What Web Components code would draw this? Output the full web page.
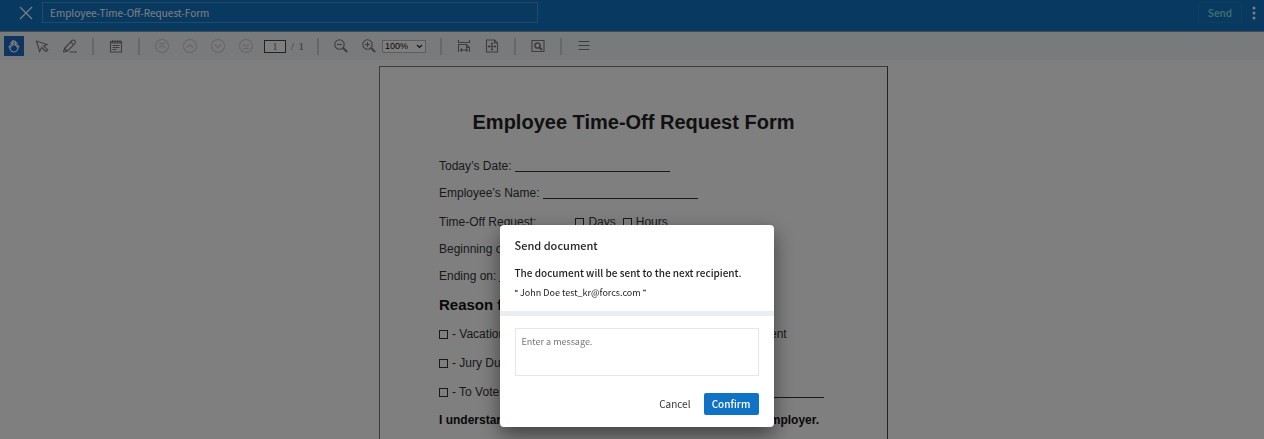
<!DOCTYPE html>
<html lang="en">
<head>
<meta charset="utf-8">
<title>Employee-Time-Off-Request-Form</title>
<style>
html, body { margin: 0; height: 100%; }
body { background: #fff; font-family: "Noto Sans CJK KR", "Open Sans", sans-serif; }
</style>
</head>
<body>
<doc-app></doc-app>
<script>
const define = (name, html) => customElements.define(name, class extends HTMLElement {
  constructor() {
    super();
    this.attachShadow({ mode: "open" }).innerHTML = html;
  }
});

define("app-header", `
<style>
:host { display: flex; align-items: flex-start; box-sizing: border-box; height: 32px; padding: 2px 7px 0 18px; background: #1072c2; border-bottom: 1px solid #8a98a8; font-family: inherit; }
button { font: inherit; margin: 0; padding: 0; border: 0; background: none; }
svg { display: block; }
.close { width: 16px; height: 22px; display: grid; place-items: center; }
input { box-sizing: border-box; width: 40%; height: 21px; margin-left: 8px; padding: 0 7px 1px; border: 1px solid #4a94d0; border-radius: 0; background: transparent; color: #fff; font: 10px "Noto Sans CJK KR", sans-serif; }
.send { box-sizing: border-box; width: 44px; height: 21px; margin-left: auto; border: 1px solid #1b80b8; border-radius: 2px; color: #86e5dc; font-size: 10px; font-weight: 500; line-height: 19px; }
.more { width: 6px; height: 21px; margin-left: 9px; display: grid; place-items: center; }
</style>
<button class="close" aria-label="Close"><svg width="14" height="14" viewBox="0 0 14 14"><path d="M1 1l12 12M13 1L1 13" stroke="#fff" stroke-width="1.200"/></svg></button>
<input aria-label="Document name" value="Employee-Time-Off-Request-Form">
<button class="send">Send</button>
<button class="more" aria-label="More"><svg width="4" height="14" viewBox="0 0 4 14" fill="#fff"><circle cx="2" cy="2" r="1.500"/><circle cx="2" cy="7" r="1.500"/><circle cx="2" cy="12" r="1.500"/></svg></button>
`);

define("tool-button", `
<style>
:host { display: block; width: 20px; height: 20px; flex: none; }
button { width: 100%; height: 100%; padding: 0; border: 0; background: none; display: grid; place-items: center; color: inherit; }
:host([active]) button { background: #1c6ac0; }
</style>
<button><slot></slot></button>
`);

define("tool-bar", `
<style>
:host { display: flex; align-items: center; box-sizing: border-box; height: 28px; padding-left: 4px; background: #f3f4f7; color: #7c7c7c; }
svg { display: block; width: 16px; height: 16px; fill: none; stroke: currentColor; stroke-width: 1.100; }
.sep { width: 2px; height: 17px; background: #cfcfcf; }
.g3 { margin-left: 3px; } .g8 { margin-left: 8px; } .g12 { margin-left: 12px; } .g14 { margin-left: 14px; }
.off { color: #cdcdcd; }
input { box-sizing: border-box; width: 22px; height: 13px; padding: 0; border: 1px solid #444; border-radius: 0; background: #fff; color: #777; text-align: center; font: 10px "Liberation Serif", serif; margin-left: 8px; }
.total { font: 10px "Liberation Serif", serif; color: #666; margin-left: 5px; width: 14px; white-space: pre; }
.zoom { display: grid; align-items: center; justify-items: end; }
.zoom > * { grid-area: 1 / 1; }
.zoom svg { width: 7px; height: 5px; margin-right: 3px; stroke: #222; pointer-events: none; }
select { appearance: none; box-sizing: border-box; width: 44px; height: 13px; padding: 0 2px; border: 1px solid #bbb; border-radius: 0; background: #fff; color: #111; font: 9px "Liberation Sans", sans-serif; }
</style>
<tool-button active><svg viewBox="0 0 16 16" style="color:#fff"><path d="M5 9.500V4.500q.7-1 1.400 0V8M6.400 7.500V3q.8-1 1.500 0v4.500M7.900 7.500V3.500q.8-1 1.500 0V8M9.400 8V5q.8-.8 1.400 0v4.500l.8-1.500q1-.6 1.200.4L11 12.500Q10 14 8 14 5.500 14 4.600 12L3 8.500q.5-1 1.200-.2L5 9.500"/></svg></tool-button>
<tool-button class="g8"><svg viewBox="0 0 16 16"><path d="M2.500 3l3 10.500 2.300-4 4.200 4 1.800-1.800-4.200-3.500 3.400-1.600z"/></svg></tool-button>
<tool-button class="g8"><svg viewBox="0 0 16 16"><path d="M2.500 10.500L10 2.500q1.200-1 2.700.2t.3 2.800L5.500 13l-3.900.8zM8.800 3.800l3 3M2.500 10.500l3 2.500M7.500 14H15"/></svg></tool-button>
<span class="sep g12"></span>
<tool-button class="g12"><svg viewBox="0 0 16 16"><path d="M2.500 3.500h11v10.500h-11zM2.500 5h11M4.500 7.500h7M4.500 9.500h7M4.500 11.500h4M4.500 2v2.500M7 2v2.500M9.500 2v2.500M12 2v2.500"/></svg></tool-button>
<span class="sep g12"></span>
<tool-button class="g12 off"><svg viewBox="0 0 16 16"><circle cx="8" cy="8" r="6.500"/><path d="M5 5.500h6M5 10.200l3-3 3 3"/></svg></tool-button>
<tool-button class="g8 off"><svg viewBox="0 0 16 16"><circle cx="8" cy="8" r="6.500"/><path d="M5 9.500l3-3 3 3"/></svg></tool-button>
<tool-button class="g8 off"><svg viewBox="0 0 16 16"><circle cx="8" cy="8" r="6.500"/><path d="M5 6.500l3 3 3-3"/></svg></tool-button>
<tool-button class="g8 off"><svg viewBox="0 0 16 16"><circle cx="8" cy="8" r="6.500"/><path d="M5 10.500h6M5 5.800l3 3 3-3"/></svg></tool-button>
<input aria-label="Page" value="1"><span class="total">/  1</span>
<span class="sep g12"></span>
<tool-button class="g12"><svg viewBox="0 0 16 16"><circle cx="6.500" cy="6.500" r="4.700"/><path d="M4 6.500h5"/><path d="M10 10l4.200 4" stroke-width="2"/></svg></tool-button>
<tool-button class="g8"><svg viewBox="0 0 16 16"><circle cx="6.500" cy="6.500" r="4.700"/><path d="M4 6.500h5M6.500 4v5"/><path d="M10 10l4.200 4" stroke-width="2"/></svg></tool-button>
<span class="zoom g3"><select aria-label="Zoom"><option>100%</option></select><svg viewBox="0 0 7 5"><path d="M1 1l2.500 2.500L6 1"/></svg></span>
<span class="sep g14"></span>
<tool-button class="g12"><svg viewBox="0 0 16 16"><path d="M2.500 2v2.500h11V2M2.500 14V6.500h8l3 3V14M10.500 6.500v3h3M4.500 12h7M6 10.500L4.500 12 6 13.500M10 10.500l1.500 1.500-1.500 1.500"/></svg></tool-button>
<tool-button class="g8"><svg viewBox="0 0 16 16"><path d="M2.500 2h8l3 3v9h-11zM10.500 2v3h3M8 5v7M4.500 8.500h7M7 6l1-1 1 1M7 11l1 1 1-1M5.500 7.500l-1 1 1 1M10.500 7.500l1 1-1 1"/></svg></tool-button>
<span class="sep g12"></span>
<tool-button class="g12"><svg viewBox="0 0 16 16"><path d="M2 2.500h12v11H2z"/><circle cx="7.500" cy="7.500" r="2.600" stroke-width="1.500"/><path d="M9.500 9.500l2.500 2.500" stroke-width="1.800"/></svg></tool-button>
<span class="sep g12"></span>
<tool-button class="g12"><svg viewBox="0 0 16 16"><path d="M2.500 3.500h11M2.500 7.500h11M2.500 11.500h11"/></svg></tool-button>
`);

define("blank-line", `
<style>:host { display: block; height: 1px; margin-top: 13px; background: #333; }</style>
`);

define("form-page", `
<style>
:host { display: block; box-sizing: border-box; width: 509px; min-height: 600px; margin: 6px auto 0; padding: 43px 59px 0; border: 1px solid #777; border-right-color: #444; color: #333; font: 12px/16px "Liberation Sans", Arial, sans-serif; white-space: nowrap; }
h1 { margin: 0; text-align: center; font-size: 20px; line-height: 24px; color: #222; }
h2 { margin: 11px 0 11px; font-size: 15px; line-height: 20px; color: #111; }
.row { display: flex; margin-bottom: 11px; }
.row blank-line { width: 155px; margin-left: 3px; }
h1 + .row { margin-top: 24px; }
.request { margin-top: 13px; }
.opts { display: grid; grid-template-columns: 120px 136px 1fr; margin-bottom: 13px; }
.opts .wide { display: flex; grid-column: 2 / 4; }
.wide blank-line { flex: 1; margin-right: 4px; }
label { display: flex; align-items: center; gap: 4px; }
input { appearance: none; box-sizing: border-box; width: 9px; height: 9px; margin: 0; border: 1px solid #333; border-radius: 0; }
.units { display: flex; gap: 7px; margin-left: 39px; }
p { margin: -1px 0 0; font-weight: bold; color: #111; }
</style>
<h1>Employee Time-Off Request Form</h1>
<div class="row">Today’s Date:<blank-line></blank-line></div>
<div class="row">Employee’s Name:<blank-line></blank-line></div>
<div class="row request">Time-Off Request:<span class="units"><label><input type="checkbox">Days</label><label><input type="checkbox">Hours</label></span></div>
<div class="row">Beginning on:<blank-line></blank-line></div>
<div class="row">Ending on:<blank-line></blank-line></div>
<h2>Reason for Request</h2>
<div class="opts"><label><input type="checkbox">- Vacation</label><label><input type="checkbox">- Personal Leave</label><label><input type="checkbox">- Bereavement</label></div>
<div class="opts"><label><input type="checkbox">- Jury Duty</label><label><input type="checkbox">- Family Reasons</label></div>
<div class="opts"><label><input type="checkbox">- To Vote</label><span class="wide"><label><input type="checkbox">- Other:</label><blank-line></blank-line></span></div>
<p>I understand this request is subject to approval from my employer.</p>
`);

define("send-dialog", `
<style>
:host { display: block; width: 274px; background: #fff; border-radius: 4px; box-shadow: 0 8px 20px rgba(0,0,0,.5); color: #222; font-family: inherit; }
header { padding: 10px 15px 11px; border-bottom: 5px solid #eaeef0; }
h2 { margin: 0 0 9px; font-size: 11px; font-weight: 500; line-height: 20px; }
p { margin: 0; font-size: 10px; font-weight: 500; line-height: 18px; }
.to { font-size: 9px; font-weight: 400; line-height: 14px; margin-top: 4px; }
.q { font: bold 6px "DejaVu Sans", sans-serif; vertical-align: 2px; }
form { padding: 12px 15px; }
textarea { display: block; box-sizing: border-box; width: 100%; height: 48px; padding: 6px; border: 1px solid #e6e6e6; border-radius: 0; resize: none; font: 9px/14px "Noto Sans CJK KR", sans-serif; }
textarea::placeholder { color: #777; }
.actions { display: flex; justify-content: flex-end; margin-top: 17px; }
button { height: 22px; padding: 0 8px; border: 0; border-radius: 2px; background: none; color: #333; font: 10px/22px "Noto Sans CJK KR", sans-serif; }
.ok { width: 55px; margin-left: 5px; background: #1072c4; color: #fff; font-weight: 500; }
</style>
<header>
<h2>Send document</h2>
<p>The document will be sent to the next recipient.</p>
<p class="to"><span class="q">❝</span> John Doe test_kr@forcs.com <span class="q">❞</span></p>
</header>
<form>
<textarea aria-label="Message" placeholder="Enter a message."></textarea>
<div class="actions"><button type="button">Cancel</button><button type="button" class="ok">Confirm</button></div>
</form>
`);

define("doc-app", `
<style>
:host { display: flex; flex-direction: column; height: 100vh; overflow: hidden; }
main { flex: 1; min-height: 0; overflow: hidden; padding-left: 3px; }
.veil { position: fixed; inset: 0; display: flex; justify-content: center; align-items: flex-end; box-sizing: border-box; padding: 0 0 12px 9px; background: rgba(0,0,0,.5); }
</style>
<app-header></app-header>
<tool-bar></tool-bar>
<main><form-page></form-page></main>
<div class="veil"><send-dialog role="dialog" aria-modal="true" aria-label="Send document"></send-dialog></div>
`);
</script>
</body>
</html>
